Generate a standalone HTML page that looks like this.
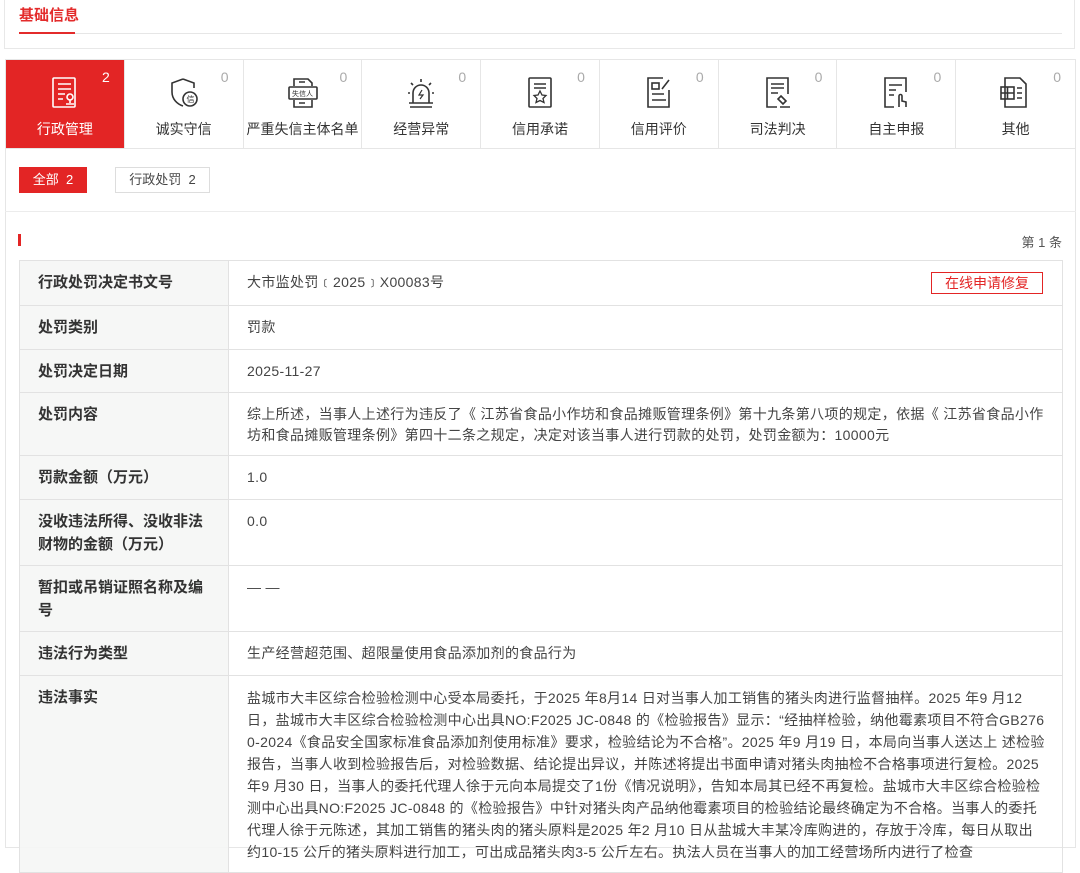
<!DOCTYPE html>
<html><head><meta charset="utf-8"><style>
*{margin:0;padding:0;box-sizing:border-box}
body{width:1080px;height:836px;overflow:hidden;background:#fff;font-family:"Liberation Sans","Noto Sans CJK SC",sans-serif;color:#333;font-size:14px;position:relative}
.topbox{position:absolute;left:4px;top:-2px;width:1071px;height:51px;border:1px solid #e8e8e8;border-top:none}
.topbox .t{position:absolute;left:14px;top:6px;font-size:15px;color:#e32b2b;font-weight:bold}
.topbox .ul{position:absolute;left:14px;top:34px;width:56px;height:2px;background:#e32b2b}
.topbox .ln{position:absolute;left:70px;top:35px;right:12px;height:1px;background:#e6e6e6}
.tabs{position:absolute;left:5px;top:59px;width:1071px;height:90px;border:1px solid #e6e6e6;display:flex}
.tab{width:119px;border-right:1px solid #e6e6e6;position:relative;text-align:center;color:#333}
.tab:last-child{border-right:none}
.tab.on{background:#e32525;color:#fff}
.tab .n{position:absolute;right:14px;top:9px;color:#aaa;font-size:14px}
.tab.on .n{color:#fff}
.tab svg{position:absolute;left:42px;top:16px}
.tab .l{position:absolute;left:0;right:0;top:59px;font-size:14px;white-space:nowrap}
.main{position:absolute;left:5px;top:148px;width:1071px;height:700px;border:1px solid #e6e6e6;border-top:none}
.f1{position:absolute;left:19px;top:167px;width:68px;height:26px;background:#e32525;color:#fff;font-size:13px;line-height:26px;text-align:center}
.f2{position:absolute;left:115px;top:167px;width:95px;height:26px;border:1px solid #ddd;font-size:13px;line-height:24px;text-align:center;color:#444}
.sep{position:absolute;left:5px;top:211px;width:1071px;height:1px;background:#ececec}
.mark{position:absolute;left:18px;top:234px;width:3px;height:12px;background:#e32525}
.pg{position:absolute;right:18px;top:232px;font-size:13px;color:#555}
table{position:absolute;left:19px;top:260px;width:1044px;border-collapse:collapse;font-size:14px}
td{border:1px solid #e2e2e2;vertical-align:top;line-height:21px}
td.k{width:209px;background:rgba(245,246,245,.9);font-weight:bold;color:#333;padding:10px 14px 9px 18px;font-size:15px;line-height:23px}
td.v{padding:11px 16px 9px 18px;color:#444;position:relative;letter-spacing:.33px;word-break:break-all}
td.v.ft{line-height:22px}
.btn{position:absolute;right:19px;top:11px;border:1px solid #e32525;color:#e32525;font-size:14px;line-height:20px;padding:0 13px;letter-spacing:0}
</style></head><body>
<div class="topbox"><div class="t">基础信息</div><div class="ul"></div><div class="ln"></div></div>
<div class="tabs">
<div class="tab on"><svg width="34" height="34" viewBox="0 0 34 34" fill="none" stroke="#fff" stroke-width="1.6"><rect x="5" y="2" width="22" height="29" rx="1"/><path d="M10 8h13M10 13h13M10 18h7M10 23h5"/><circle cx="22" cy="21" r="3"/><path d="M22 24v3M18 28h8"/></svg><span class="n">2</span><div class="l">行政管理</div></div>
<div class="tab"><svg width="34" height="34" viewBox="0 0 34 34" fill="none" stroke="#333" stroke-width="1.6"><path d="M16 3l-11 4v9c0 7 5 12 11 14"/><path d="M16 3l11 4v5"/><circle cx="23" cy="23" r="7"/><text x="19.5" y="26" font-size="8" fill="#333" stroke="none">信</text></svg><span class="n">0</span><div class="l">诚实守信</div></div>
<div class="tab"><svg width="34" height="34" viewBox="0 0 34 34" fill="none" stroke="#333" stroke-width="1.6"><path d="M8 10V3h14l4 4v3M8 24v7h18v-7"/><rect x="3" y="11" width="28" height="12" rx="1"/><text x="6" y="20" font-size="7" fill="#333" stroke="none">失信人</text><path d="M13 6h6M13 27h6"/></svg><span class="n">0</span><div class="l">严重失信主体名单</div></div>
<div class="tab"><svg width="34" height="34" viewBox="0 0 34 34" fill="none" stroke="#333" stroke-width="1.6"><path d="M9 27V17a8 8 0 0116 0v10M5 27h24M6 31h22M17 3v3M7 7l2 2M27 7l-2 2M4 17h2M28 17h2"/><path d="M18 14l-3 5h4l-3 4" stroke-width="1.2"/></svg><span class="n">0</span><div class="l">经营异常</div></div>
<div class="tab"><svg width="34" height="34" viewBox="0 0 34 34" fill="none" stroke="#333" stroke-width="1.6"><rect x="6" y="2" width="22" height="29" rx="1"/><path d="M11 8h12M11 12h12"/><path d="M17 15l2 4 4 .5-3 3 1 4-4-2-4 2 1-4-3-3 4-.5z" stroke-width="1.3"/></svg><span class="n">0</span><div class="l">信用承诺</div></div>
<div class="tab"><svg width="34" height="34" viewBox="0 0 34 34" fill="none" stroke="#333" stroke-width="1.6"><path d="M27 14v17H6V2h15"/><rect x="10" y="7" width="7" height="6"/><path d="M20 13l7-9M10 18h12M10 24h14" /></svg><span class="n">0</span><div class="l">信用评价</div></div>
<div class="tab"><svg width="34" height="34" viewBox="0 0 34 34" fill="none" stroke="#333" stroke-width="1.6"><path d="M16 31H6V2h21v16"/><path d="M10 8h13M10 12h13M10 17h7"/><path d="M20 20l5 5-3 3-5-5zM19 31h10"/></svg><span class="n">0</span><div class="l">司法判决</div></div>
<div class="tab"><svg width="34" height="34" viewBox="0 0 34 34" fill="none" stroke="#333" stroke-width="1.6"><path d="M15 31H6V2h21v14"/><path d="M10 9h13M10 14h7M10 19h5"/><path d="M20 31v-11a1.5 1.5 0 013 0v5l4 1v5"/></svg><span class="n">0</span><div class="l">自主申报</div></div>
<div class="tab"><svg width="34" height="34" viewBox="0 0 34 34" fill="none" stroke="#333" stroke-width="1.6"><path d="M7 31V2h15l6 6v23z"/><rect x="3" y="11" width="13" height="12"/><path d="M3 17h13M9.5 11v12M19 12h5M19 17h5M19 22h5"/></svg><span class="n">0</span><div class="l">其他</div></div>
</div>
<div class="main"></div>
<div class="f1">全部&nbsp; 2</div>
<div class="f2">行政处罚&nbsp; 2</div>
<div class="sep"></div>
<div class="mark"></div>
<div class="pg">第 1 条</div>
<table>
<tr style="height:45px"><td class="k">行政处罚决定书文号</td><td class="v">大市监处罚﹝2025﹞X00083号<span class="btn">在线申请修复</span></td></tr>
<tr style="height:44px"><td class="k">处罚类别</td><td class="v">罚款</td></tr>
<tr style="height:43px"><td class="k">处罚决定日期</td><td class="v">2025-11-27</td></tr>
<tr style="height:60px"><td class="k">处罚内容</td><td class="v">综上所述，当事人上述行为违反了《 江苏省食品小作坊和食品摊贩管理条例》第十九条第八项的规定，依据《 江苏省食品小作坊和食品摊贩管理条例》第四十二条之规定，决定对该当事人进行罚款的处罚，处罚金额为：10000元</td></tr>
<tr style="height:44px"><td class="k">罚款金额（万元）</td><td class="v">1.0</td></tr>
<tr style="height:66px"><td class="k">没收违法所得、没收非法财物的金额（万元）</td><td class="v">0.0</td></tr>
<tr style="height:64px"><td class="k">暂扣或吊销证照名称及编号</td><td class="v">— —</td></tr>
<tr style="height:44px"><td class="k">违法行为类型</td><td class="v">生产经营超范围、超限量使用食品添加剂的食品行为</td></tr>
<tr><td class="k">违法事实</td><td class="v ft">盐城市大丰区综合检验检测中心受本局委托，于2025 年8月14 日对当事人加工销售的猪头肉进行监督抽样。2025 年9 月12 日，盐城市大丰区综合检验检测中心出具NO:F2025 JC-0848 的《检验报告》显示：“经抽样检验，纳他霉素项目不符合GB2760-2024《食品安全国家标准食品添加剂使用标准》要求，检验结论为不合格”。2025 年9 月19 日，本局向当事人送达上 述检验报告，当事人收到检验报告后，对检验数据、结论提出异议，并陈述将提出书面申请对猪头肉抽检不合格事项进行复检。2025 年9 月30 日，当事人的委托代理人徐于元向本局提交了1份《情况说明》，告知本局其已经不再复检。盐城市大丰区综合检验检测中心出具NO:F2025 JC-0848 的《检验报告》中针对猪头肉产品纳他霉素项目的检验结论最终确定为不合格。当事人的委托代理人徐于元陈述，其加工销售的猪头肉的猪头原料是2025 年2 月10 日从盐城大丰某冷库购进的，存放于冷库，每日从取出约10-15 公斤的猪头原料进行加工，可出成品猪头肉3-5 公斤左右。执法人员在当事人的加工经营场所内进行了检查</td></tr>
</table>
</body></html>
